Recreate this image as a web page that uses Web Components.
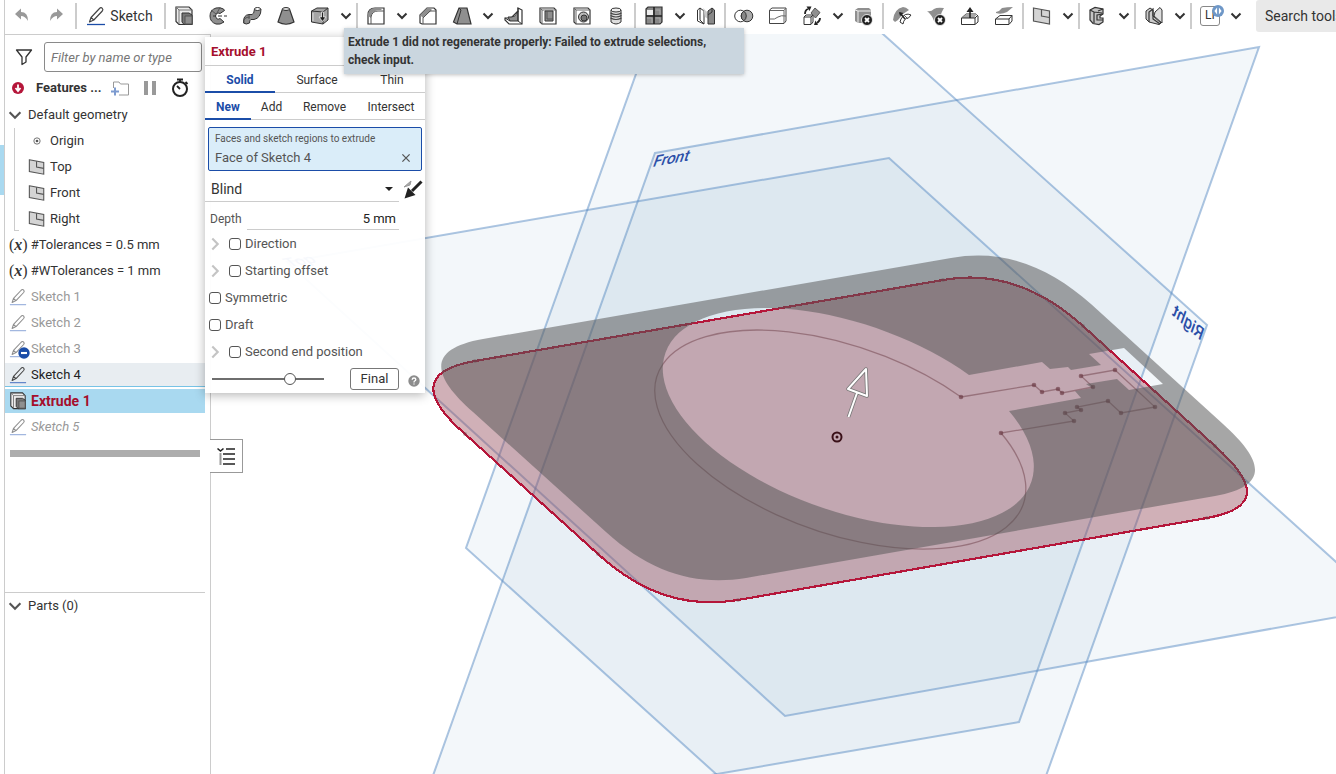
<!DOCTYPE html>
<html lang="en">
<head>
<meta charset="utf-8">
<title>Part Studio</title>
<style>
html,body{margin:0;height:100%;overflow:hidden}
body{font:14px/18px Roboto,"Liberation Sans",sans-serif;color:#333;background:#fff}
</style>
</head>
<body>
<part-studio></part-studio>
<script>
const define = (name, html, setup) => {
  const template = document.createElement('template');
  template.innerHTML = html;
  customElements.define(name, class extends HTMLElement {
    connectedCallback() {
      if (this.shadowRoot) return;
      this.attachShadow({mode: 'open'}).append(template.content.cloneNode(true));
      if (setup) setup(this, this.shadowRoot);
    }
  });
};

const G = '#8f8f8f', K = '#333';
const ICONS = {
  undo: `<path d="M3 8L9 2.500V6Q16 6 16 15Q13 10 9 10V13.500Z" fill="#999"/>`,
  redo: `<path d="M17 8L11 2.500V6Q4 6 4 15Q7 10 11 10V13.500Z" fill="#999"/>`,
  pencil: `<path d="M1 18.500H19" stroke="var(--ink-line,#1b4da8)" stroke-width="1.300"/><path d="M3.500 16L5 11.500L13.500 2.500Q15 1 16.300 2.300Q17.500 3.500 16.300 5L7.800 14ZM5 11.500L7.800 14" fill="none" stroke="#444" stroke-width="1.200" stroke-linejoin="round"/>`,
  extrude: `<path d="M2 1H15L18 4V18.500H5L2 15.500Z" fill="#ececec" stroke="${K}" stroke-width="1.200"/><path d="M2 1L5 4V18M5 4H18" fill="none" stroke="#777"/><path d="M8 7H15L18 9V18.500H10L8 16Z" fill="#777" stroke="${K}"/><path d="M11 10H18V18H11Z" fill="${G}" stroke="#555"/>`,
  revolve: `<path d="M15.500 3Q12 1 8 2Q2 4 2 10Q2 16 8 18Q12 19 16 16L12 12.500Q10 14 8.500 12.500Q6.500 10 8.500 7.500Q10 6.500 12 7.500L16.500 4.500Z" fill="${G}" stroke="${K}"/><path d="M12 1.500L9 7M3 4L8 8" stroke="#555"/><path d="M9 10H19" stroke="#fff" stroke-width="3"/><path d="M5 10H8M10 10H14M16 10H19" stroke="${K}"/>`,
  sweep: `<path d="M1.500 17Q1 9 7 8.500H10Q12 8.500 12.500 3L19 3Q19 12 12 13.500H9Q7.500 14 7.500 17Q4 19 1.500 17Z" fill="${G}" stroke="${K}"/><ellipse cx="15.500" cy="3" rx="3" ry="1.500" fill="#fff" stroke="${K}"/><path d="M2 17Q1 11 8 11M7 9V13" fill="none" stroke="#555"/>`,
  loft: `<path d="M6.500 3L2 16Q10 20.500 18 16L13.500 3Z" fill="${G}" stroke="${K}" stroke-width="1.200"/><ellipse cx="10" cy="3" rx="3.500" ry="1.500" fill="#ddd" stroke="${K}"/>`,
  thicken: `<path d="M1.500 5L7 2H18V14L13 18L1.500 16Z" fill="#a5a5a5" stroke="${K}"/><path d="M1.500 5L13 6V18M13 6L18 2" fill="none" stroke="${K}"/><path d="M3 7V15" stroke="#ddd"/><path d="M11.500 6V11H9L12.500 15.500L16 11H13.500V6Z" fill="#222" stroke="#eee" stroke-width=".8"/>`,
  fillet: `<path d="M2 18V9Q2 2 9 2H18V18Z" fill="#fff" stroke="${K}" stroke-width="1.200"/><path d="M2 10Q2 2 9 2H14L16 4H12Q5 5 5 12L2 10Z" fill="${G}"/><path d="M5 18V11Q6 5 12 5H18" fill="none" stroke="#555"/>`,
  chamfer: `<path d="M2 17V9L9 2H16L18 4V18H4Z" fill="#fff" stroke="${K}" stroke-width="1.200"/><path d="M2 9L9 2H12L14 4L5 12Z" fill="${G}"/><path d="M5 18V12L12 5H18" fill="none" stroke="#555"/>`,
  draft: `<path d="M7 2H15L19 18H5L1.500 16Z" fill="${G}" stroke="${K}" stroke-width="1.200"/><path d="M7 2L9 4L5 18" fill="none" stroke="${K}"/>`,
  rib: `<path d="M14 2L18 4V18L5 18L1 14V12L7 12L14 5Z" fill="#fff" stroke="${K}" stroke-width="1.200"/><path d="M14 5V15H6L4 11Q12 12 14 5Z" fill="${G}" stroke="${K}"/><path d="M14 2V15L18 18M1 12L6 15" fill="none" stroke="${K}"/>`,
  shell: `<path d="M2 2H16L18 4V18H4L2 16Z" fill="#fff" stroke="${K}" stroke-width="1.200"/><path d="M2 2L4 4V18M4 4H18" fill="none" stroke="#666"/><path d="M7 5H15V15H7Z" fill="${G}" stroke="${K}"/><path d="M9 5V13H15" fill="none" stroke="#555"/>`,
  hole: `<path d="M2 2H16L18 4V18H4L2 16Z" fill="#fff" stroke="${K}" stroke-width="1.200"/><path d="M2 2L4 4V18M4 4H18" fill="none" stroke="#666"/><circle cx="11.500" cy="11" r="5" fill="#bbb" stroke="${K}"/><circle cx="12" cy="12" r="3" fill="#777" stroke="${K}"/>`,
  thread: `<path d="M5 4V16Q10 20 15 16V4" fill="#ddd" stroke="${K}"/><ellipse cx="10" cy="4" rx="5" ry="2" fill="#eee" stroke="${K}"/><path d="M4.500 7Q10 10 15.500 7M4.500 9.500Q10 12.500 15.500 9.500M4.500 12Q10 15 15.500 12" fill="none" stroke="#444" stroke-width="1.100"/>`,
  pattern: `<path d="M2 3L4 1H18V16L16 18H2Z" fill="#888" stroke="${K}" stroke-width="1.200"/><path d="M3 4H9V9H3Z" fill="#eee"/><path d="M2 10H18M10 1V18" stroke="#222" stroke-width="1.600"/><path d="M11.500 4H16V8.500M3 12H8V17M11.500 12H16V17" fill="none" stroke="#aaa"/>`,
  mirror: `<path d="M1.500 4L4 2L8 5V18L1.500 15Z" fill="#fff" stroke="${K}"/><path d="M4 2V14L8 18" fill="none" stroke="${K}"/><path d="M7 2L14 9V14L9 11Z" fill="#c9c9c9"/><path d="M12 5L16 2L18.500 4V18H12Z" fill="#888" stroke="${K}"/><path d="M12 9L16 6V2" fill="none" stroke="#333"/>`,
  boolean: `<circle cx="6.500" cy="10" r="5.800" fill="#fff" stroke="${K}"/><circle cx="13" cy="10" r="5.800" fill="#aaa" stroke="${K}"/><path d="M9.750 5.200A5.800 5.800 0 0 1 9.750 14.800A5.800 5.800 0 0 1 9.750 5.200Z" fill="#888" stroke="${K}"/>`,
  split: `<path d="M1.500 4L4 2H18V15L16 17.500H1.500Z" fill="#fff" stroke="#444"/><path d="M1.500 4.500H16V17M16 4.500L18 2M1.500 13Q7 14 10 11Q13 9 18 10" fill="none" stroke="#666"/>`,
  transform: `<path d="M2 11L4 9H11V16L9 18.500H2Z" fill="#fff" stroke="${K}"/><path d="M2 11H9V18M9 11L11 9" fill="none" stroke="${K}"/><path d="M13 2L18 6.500L13.500 12L9 7Z" fill="${G}" stroke="#555"/><path d="M3 8Q3 4 6 3" fill="none" stroke="#222" stroke-width="1.800"/><path d="M4.500 .5H9.500L7.500 5Z" fill="#222"/><path d="M18 12Q18 15 15 17" fill="none" stroke="#222" stroke-width="1.800"/><path d="M16 19H12L13.500 14.500Z" fill="#222"/>`,
  delpart: `<path d="M1 4L4 2H15L17 4V17H4L1 15Z" fill="${G}"/><path d="M1 4L4 5V17M4 5H17" fill="none" stroke="#eee"/><circle cx="13" cy="14" r="5.500" fill="#222" stroke="#fff" stroke-width=".8"/><path d="M11 12L15 16M15 12L11 16" stroke="#fff" stroke-width="1.800"/>`,
  moveface: `<path d="M1 14Q2 3 11 1Q14 1 17 4L11 8L6 14L3 16Z" fill="${G}"/><path d="M9 13Q13 6 19 9L16.500 12Q12 12 11 18L8 16Z" fill="#fff" stroke="${K}"/><path d="M13 13L8 7" stroke="#222" stroke-width="1.500"/><path d="M7 6L11.500 7L8 10Z" fill="#222"/><path d="M12 9L16 13" stroke="#555"/>`,
  delface: `<path d="M1 5Q5 6 8 3Q11 1 18 2Q15 7 15 9L8 15Q6 9 1 5Z" fill="${G}"/><circle cx="14" cy="14" r="5.500" fill="#222" stroke="#fff" stroke-width=".8"/><path d="M12 12L16 16M16 12L12 16" stroke="#fff" stroke-width="1.800"/>`,
  moveup: `<path d="M1.500 12L6 8H16L18 10V16L15 18.500H1.500Z" fill="#fff" stroke="${K}"/><path d="M6 8H17L14 12H2Z" fill="#aaa"/><path d="M1.500 12H15V18M15 12L18 9" fill="none" stroke="${K}"/><path d="M10 12V5" stroke="#222" stroke-width="1.600"/><path d="M10 1L13.500 6H6.500Z" fill="#222"/>`,
  replace: `<path d="M2 6Q6 5 8 2Q13 1 19 1L13 6Q7 9 2 7Z" fill="${G}"/><path d="M1.500 13L6 9.500H18V15L15 18.500H1.500Z" fill="#fff" stroke="${K}"/><path d="M1.500 13H15V18M15 13L18 9.500" fill="none" stroke="${K}"/>`,
  plane: `<path d="M1.500 2L17.500 5V18L1.500 15Z" fill="#d4d4d4" stroke="#555" stroke-width="1.200"/><path d="M9.500 3.500V10L17.500 11.500" fill="none" stroke="#555" stroke-width="1.200"/>`,
  frame: `<path d="M2 4L7 1.500L15 3V8L12 10V12H15V16L11 18.500L5 17.500L2 14Z" fill="#c5c5c5" stroke="${K}" stroke-width="1.200"/><path d="M2 4L6 6V17M6 6L14 7M15 3L10 5M15 8L9 9V14H15" fill="none" stroke="${K}" stroke-width="1.200"/>`,
  sheet: `<path d="M2 5L6 2L9 4V10L17 17L15 18.500L5 16L2 13Z" fill="#ccc" stroke="${K}"/><path d="M11 6L16 1.500L18 4V17L10 10Z" fill="#ddd" stroke="${K}"/><path d="M5 16V6L9 3V13L16 18" fill="none" stroke="${K}" stroke-width="1.200"/>`,
  funnel: `<path d="M2.500 3H17.500L12 10V15L8 17.500V10Z" fill="none" stroke="${K}" stroke-width="1.300" stroke-linejoin="round"/>`,
  errdown: `<circle cx="10" cy="10" r="6" fill="#b5163a"/><path d="M10 6.500V12M7.500 10L10 13L12.500 10" fill="none" stroke="#fff" stroke-width="1.800"/>`,
  addfolder: `<path d="M3.500 10V4H9L10.500 6H18.500V17H9" fill="none" stroke="#999"/><path d="M5 9.500V17.500M1 13.500H9" stroke="#7d9bd0" stroke-width="2"/>`,
  pause: `<path d="M6 3V17M14 3V17" stroke="#999" stroke-width="4"/>`,
  timer: `<circle cx="10" cy="11" r="7" fill="#fff" stroke="#222" stroke-width="2"/><path d="M7 1.500H13M10 1.500V4M10 11L7 8M15.500 4L17.500 6" stroke="#222" stroke-width="1.800"/>`,
  down: `<path d="M4 7L10 13L16 7" fill="none" stroke="#555" stroke-width="2.400"/>`,
  right: `<path d="M7 4L13 10L7 16" fill="none" stroke="#c4c4c4" stroke-width="2.400"/>`,
  origin: `<circle cx="10" cy="10" r="3.500" fill="none" stroke="#666"/><circle cx="10" cy="10" r="1.500" fill="#555"/>`,
  badge: `<circle cx="10" cy="10" r="9.500" fill="#1b4da8"/><path d="M5 10H15" stroke="#fff" stroke-width="3.500"/>`,
  flip: `<path d="M9 11L18.500 1.500" stroke="#222" stroke-width="3"/><path d="M1.500 18.500L5 7.500L12.500 15Z" fill="#222"/><path d="M1 7L8 1L7 5Z" fill="#aaa" stroke="#999"/>`,
  help: `<circle cx="10" cy="10" r="9.500" fill="#8c8c8c"/><path d="M7 8Q7 5 10 5Q13 5 13 7.500Q13 9 11 10Q10 10.500 10 12.500M10 14V16" fill="none" stroke="#fff" stroke-width="2.200"/>`,
  close: `<path d="M5.500 5.500L14.500 14.500M14.500 5.500L5.500 14.500" stroke="#555" stroke-width="1.600"/>`,
  list: `<path d="M10 3H19M7 8H19M7 13H19M7 18H19" stroke="#222" stroke-width="1.300"/><path d="M4.500 7V19" stroke="#999" stroke-width="2"/><path d="M1.500 2.500L4.500 5L7.500 2.500" fill="none" stroke="#222" stroke-width="1.600"/>`,
  custom: `<circle cx="10" cy="10" r="10" fill="#6e97c7"/><path d="M8.500 8V4L4 10L8.500 16V12M11.500 8V4L16 10L11.500 16V12" fill="#fff"/>`
};

define('cad-icon', `<style>:host{display:block;flex:none;width:20px;height:20px}svg{display:block;width:100%;height:100%}</style><svg viewBox="0 0 20 20" aria-hidden="true"></svg>`,
  (el, root) => { root.querySelector('svg').innerHTML = ICONS[el.getAttribute('name')] || ''; });

define('tool-button', `<style>
  :host{display:block;flex:none}
  button{display:flex;align-items:center;justify-content:center;gap:4px;width:var(--tool-width,34px);height:32px;border:0;padding:0;background:none;font:inherit;color:inherit}
</style><button><slot></slot></button>`, (el, root) => {
  root.querySelector('button').setAttribute('aria-label', el.getAttribute('label'));
});

define('tool-more', `<style>
  :host{display:block;flex:none}
  button{display:flex;align-items:center;justify-content:center;width:18px;height:32px;border:0;padding:0;background:none}
  svg{width:12px;height:8px}
</style><button aria-label="More tools"><svg viewBox="0 0 12 8"><path d="M1.500 1.500L6 6L10.500 1.500" fill="none" stroke="#333" stroke-width="2"/></svg></button>`);

define('tool-divider', `<style>:host{display:block;flex:none;width:2px;height:26px;margin:0 1px;background:#ccc}</style>`);

const tool = n => `<tool-button label="${n}"><cad-icon name="${n}"></cad-icon></tool-button>`;
const more = '<tool-more></tool-more>', divider = '<tool-divider></tool-divider>';
define('tool-bar', `<style>
  :host{display:flex;align-items:center;height:32px;padding-bottom:2px;overflow:hidden;white-space:nowrap}
  .wide{--tool-width:83px;padding-right:2px}
  .history{display:flex;padding-right:1px}
  .custom{position:relative;box-sizing:border-box;width:20px;height:20px;border:1px solid #888;border-radius:3px;font-size:12px;line-height:16px;text-align:left;padding-left:4px}
  .custom cad-icon{position:absolute;right:-5px;top:-2px;width:12px;height:12px}
  input{box-sizing:border-box;flex:1 0 80px;min-width:0;height:32px;margin-left:11px;border:0;border-radius:3px 0 0 3px;background:#e9e9e9;padding:0 0 0 9px;font:inherit;color:#333}
  input::placeholder{color:#333;opacity:1}
</style>
<div class="history">${tool('undo')}${tool('redo')}</div>${divider}
<tool-button class="wide" label="Sketch"><cad-icon name="pencil"></cad-icon>Sketch</tool-button>${divider}
${['extrude','revolve','sweep','loft','thicken'].map(tool).join('')}${more}${divider}
${tool('fillet')}${more}${tool('chamfer')}${tool('draft')}${more}${['rib','shell','hole','thread'].map(tool).join('')}${divider}
${tool('pattern')}${more}${tool('mirror')}${divider}
${['boolean','split','transform'].map(tool).join('')}${more}${tool('delpart')}${divider}
${['moveface','delface','moveup','replace'].map(tool).join('')}${divider}
${tool('plane')}${more}${divider}${tool('frame')}${more}${divider}${tool('sheet')}${more}${divider}
<tool-button label="Custom features"><span class="custom">LI<cad-icon name="custom"></cad-icon></span></tool-button>${more}
<input aria-label="Search tools" placeholder="Search tools…">`);

define('tree-row', `<style>
  :host{display:flow-root;height:26px}
  div{position:relative;display:flex;align-items:center;height:24px;margin:1px 0;padding-left:4px;gap:4px;white-space:nowrap}
  cad-icon{width:18px;height:18px}
  cad-icon[name=down]{margin-left:-3px}
  .badge{position:absolute;left:13px;top:10px;width:12px;height:12px}
  :host([nested]) div{padding-left:23px}
  :host([variable]) div{gap:3px}
  .var{display:none;font:italic bold 16px/18px "Liberation Serif",serif}
  .var i{font-style:normal;font-weight:normal}
  :host([variable]) .var{display:block}
  :host([variable]) cad-icon{display:none}
  :host([dim]){color:#999}
  :host([dim]) cad-icon.main{opacity:.6}
  :host([pending]){font-style:italic}
  :host([hover]) div{height:23px;background:#e8edf1;border-bottom:1px solid #76c3e6}
  :host([hover]){color:#222}
  :host([active]) div{background:#a9d9f0}
  :host([active]){color:#a50f2d;font-weight:bold;font-size:14px}
  .main{--ink-line:#5b80c8}
</style><div><span class="var"><i>(</i>x<i>)</i></span><slot></slot></div>`, (el, root) => {
  const name = el.getAttribute('icon'), box = root.querySelector('div');
  if (name) box.insertAdjacentHTML('afterbegin', `<cad-icon class="main" name="${name}"></cad-icon>`);
  else if (!el.hasAttribute('variable')) box.querySelector('.var').remove();
  if (el.hasAttribute('excluded')) box.insertAdjacentHTML('beforeend', '<cad-icon class="badge" name="badge"></cad-icon>');
});

define('feature-tree', `<style>
  :host{display:flex;flex-direction:column;box-sizing:border-box;border-top:1px solid #ccc;border-right:1px solid #ccc;padding-right:5px;font-size:13px}
  .filter{display:flex;align-items:center;gap:10px;padding:7px 3px 0 9px}
  .filter input{box-sizing:border-box;flex:1;min-width:0;height:30px;border:1px solid #8a8a8a;border-radius:3px;padding:0 6px;font:inherit;font-style:italic;color:#333}
  input::placeholder{color:#777;opacity:1}
  .head{display:flex;align-items:center;height:30px;padding:1px 0 0 3px;box-sizing:border-box}
  .head b{width:67px;margin:0 7px 0 8px;white-space:nowrap}
  .head button{border:0;padding:0;background:none;margin-right:10px}
  .nest{position:relative}
  .nest::before{content:"";position:absolute;left:9px;top:0;bottom:1px;width:5px;border-bottom:1px solid #ccc;background:linear-gradient(#ccc,#ccc) 0 0/1px 100% no-repeat}
  .rollback{height:7px;margin:10px 5px 0;background:#adadad}
  .parts{margin-top:135px;border-top:1px solid #ccc}
</style>
<div class="filter"><cad-icon name="funnel"></cad-icon><input aria-label="Filter" placeholder="Filter by name or type"></div>
<div class="head"><cad-icon name="errdown"></cad-icon><b>Features ...</b><button aria-label="Add folder"><cad-icon name="addfolder"></cad-icon></button><button aria-label="Pause"><cad-icon name="pause"></cad-icon></button><button aria-label="Timer"><cad-icon name="timer"></cad-icon></button></div>
<tree-row icon="down">Default geometry</tree-row>
<div class="nest">
<tree-row nested icon="origin">Origin</tree-row><tree-row nested icon="plane">Top</tree-row><tree-row nested icon="plane">Front</tree-row><tree-row nested icon="plane">Right</tree-row>
</div>
<tree-row variable>#Tolerances = 0.5 mm</tree-row><tree-row variable>#WTolerances = 1 mm</tree-row>
<tree-row dim icon="pencil">Sketch 1</tree-row><tree-row dim icon="pencil">Sketch 2</tree-row><tree-row dim excluded icon="pencil">Sketch 3</tree-row>
<tree-row hover icon="pencil">Sketch 4</tree-row><tree-row active icon="extrude">Extrude 1</tree-row><tree-row dim pending icon="pencil">Sketch 5</tree-row>
<div class="rollback"></div>
<div class="parts"><tree-row icon="down">Parts (0)</tree-row></div>`);

define('tab-strip', `<style>
  :host{display:grid;height:26px;border-bottom:1px solid #ccc;font-size:12px}
  ::slotted(button){border:0;border-bottom:2px solid transparent;margin-bottom:-1px;background:none;padding:2px 0 0;font:inherit;color:#333}
  ::slotted(button[aria-selected=true]){color:#1b4da8;border-color:#1b4da8;font-weight:bold}
</style><slot></slot>`);

define('check-row', `<style>
  :host{display:flex;align-items:center;height:27px;color:#555;padding-left:4px}
  label{display:flex;align-items:center;gap:4px}
  input{appearance:none;box-sizing:border-box;width:12px;height:12px;margin:0;border:1px solid #555;border-radius:3px;background:#fff}
  cad-icon{display:none;width:18px;height:18px;margin:0 5px 0 -3px}
  :host([expandable]) cad-icon{display:block}
</style><cad-icon name="right"></cad-icon><label><input type="checkbox"><slot></slot></label>`);

define('extrude-dialog', `<style>
  :host{display:block;box-sizing:border-box;width:220px;background:rgba(255,255,255,.96);box-shadow:0 2px 10px rgba(0,0,0,.3);font-size:13px}
  h2{margin:0;height:28px;padding-left:6px;font:bold 13px/29px Roboto,sans-serif;color:#a50f2d;border-bottom:1px solid #ccc}
  .kind{grid-template-columns:70px 84px 1fr}
  .op{grid-template-columns:46px 41px 65px 1fr}
  .pick{box-sizing:border-box;height:44px;margin:7px 3px 6px;border:1px solid #1b4da8;border-radius:2px;background:#daedf9;padding:3px 6px;color:#555}
  .pick small{display:block;font-size:10px;line-height:16px}
  .pick p{display:flex;justify-content:space-between;align-items:center;margin:0;line-height:22px}
  .pick button,.flip{border:0;background:none;padding:0}
  .pick cad-icon{width:16px;height:16px;margin-right:1px}
  .end{display:flex;align-items:center;height:25px}
  .choice{position:relative;width:194px;border-bottom:1px solid #ccc}
  select{appearance:none;display:block;width:100%;height:24px;border:0;background:none;padding:0 6px;font:inherit;font-size:14px;color:#333}
  .choice::after{content:"";position:absolute;right:6px;top:10px;border:4px solid transparent;border-top-color:#222;border-bottom:0}
  .flip{margin-left:4px}
  .depth{display:flex;align-items:center;height:28px;padding:0 26px 0 5px}
  .depth label{width:37px;padding-top:6px;font-size:12px;color:#555}
  .depth input{box-sizing:border-box;flex:1;min-width:0;height:22px;margin-top:6px;border:0;border-bottom:1px solid #ccc;background:none;text-align:right;font:inherit;color:#222;padding:0 3px 0}
  footer{display:flex;align-items:center;height:28px}
  input[type=range]{appearance:none;width:112px;height:12px;margin:0 26px 0 7px;background:linear-gradient(#6e6e6e,#6e6e6e) center/100% 2px no-repeat}
  input[type=range]::-webkit-slider-thumb{appearance:none;width:12px;height:12px;box-sizing:border-box;border:1px solid #555;border-radius:50%;background:#fff}
  .final{box-sizing:border-box;width:49px;height:22px;border:1px solid #777;border-radius:3px;background:#fff;padding:0;font:inherit;line-height:18px;color:#333}
  .help{width:12px;height:12px;margin:4px 0 0 9px}
</style>
<h2>Extrude 1</h2>
<tab-strip class="kind"><button aria-selected="true">Solid</button><button>Surface</button><button>Thin</button></tab-strip>
<tab-strip class="op"><button aria-selected="true">New</button><button>Add</button><button>Remove</button><button>Intersect</button></tab-strip>
<div class="pick"><small>Faces and sketch regions to extrude</small><p>Face of Sketch 4<button aria-label="Clear"><cad-icon name="close"></cad-icon></button></p></div>
<div class="end"><div class="choice"><select aria-label="End type"><option>Blind</option></select></div><button class="flip" aria-label="Flip direction"><cad-icon name="flip"></cad-icon></button></div>
<div class="depth"><label for="depth">Depth</label><input id="depth" value="5 mm"></div>
<check-row expandable>Direction</check-row><check-row expandable>Starting offset</check-row><check-row>Symmetric</check-row><check-row>Draft</check-row><check-row expandable>Second end position</check-row>
<footer><input type="range" aria-label="Preview opacity" min="0" max="100" value="72"><button class="final">Final</button><cad-icon class="help" name="help"></cad-icon></footer>`);

define('error-tip', `<style>
  :host{display:block;box-sizing:border-box;width:400px;padding:5px 4px;background:#cad6df;box-shadow:0 1px 4px rgba(0,0,0,.25);font:bold 12px/18px Roboto,sans-serif;color:#333}
</style><slot></slot>`);

const POINTS = [[961,397],[1034,385],[1042,392],[1058,389],[1062,393],[1093,387],[1081,376],[1115,370],[1155,407],[1121,413],[1108,401],[1077,407],[1081,410],[1065,413],[1074,421],[1001,433]];
const JOINTS = [[475,361],[465,434],[598,554],[738,600],[1207,518],[1215,446],[1083,326],[943,280]];
const dots = (list, r) => list.map(p => `<circle cx="${p[0]}" cy="${p[1]}" r="${r}"/>`).join('');
const OUTLINE = 'M475 361C418 371 424 398 465 434L598 554C643 595 688 608 738 600L1207 518C1262 508 1256 483 1215 446L1083 326C1044 291 998 270 943 280Z';
define('model-view', `<style>
  :host{display:block;overflow:hidden}
  svg{display:block;width:100%;height:100%}
  .plane{fill:rgba(100,150,190,.08);stroke:rgba(90,140,195,.5);stroke-width:2}
  text{font:500 17px Roboto,sans-serif;fill:#2c50a8}
</style>
<svg role="img" aria-label="Model"><g transform="translate(-205 -34)">
  <path class="plane" d="M655 153L1259 47L1019 722L415 826Z"/>
  <path class="plane" d="M707 -124L1207 325L966 1000L466 548Z"/>
  <path class="plane" d="M287 262L889 158L1387 608L785 716Z"/>
  <text transform="matrix(.9 -.16 -.34 .95 652 167)">Front</text>
  <text transform="matrix(-.74 -.67 -.34 .94 1201 341)">Right</text>
  <text transform="matrix(.98 -.17 .74 .67 290 267)">Top</text>
  <path d="${OUTLINE}" fill="rgba(156,70,82,.4)" stroke="#b5163a" stroke-width="2.200" shape-rendering="crispEdges"/>
  <path d="M${POINTS.map(p => p.join(' ')).join('L')}A194 93.700 19.500 1 1 961 397" fill="none" stroke="rgba(100,50,60,.45)" stroke-width="1.300"/>
  <g fill="rgba(100,50,60,.6)">${dots(POINTS, 2.3)}</g><g fill="rgba(100,50,60,.35)">${dots(JOINTS, 2)}</g>
  <path fill="rgba(86,86,86,.53)" fill-rule="evenodd" d="M483 339C426 349 432 376 473 412L606 532C651 573 696 586 746 578L1215 496C1270 486 1264 461 1223 424L1091 304C1052 269 1006 248 951 258ZM969 375L1042 362L1050 369L1068 367L1071 370L1101 365L1089 354L1124 348L1163 384L1129 390L1117 379L1086 384L1092 388L1075 391L1081 398L1009 411A194 93.700 19.500 1 1 969 375Z"/>
  <g fill="none" stroke-linejoin="round"><path d="M866 369L848 389L867 396ZM857 393L848.500 417" stroke="#777" stroke-width="3.600"/><path d="M866 369L848 389L867 396ZM857 393L848.500 417" stroke="#fff" stroke-width="2"/></g>
  <circle cx="837" cy="437" r="4.500" fill="none" stroke="#3a1018" stroke-width="2"/><circle cx="837" cy="437" r="1.500" fill="#3a1018"/>
</g></svg>`);

define('part-studio', `<style>
  :host{display:grid;grid-template-columns:5px minmax(0,1fr);height:100vh;overflow:hidden}
  .rail{border-right:1px solid #ccc;padding-top:145px}
  .rail i{display:block;height:50px;background:#a9d9f0}
  main{display:grid;grid-template-rows:34px minmax(0,1fr)}
  .work{position:relative;display:grid;grid-template-columns:206px minmax(0,1fr)}
  model-view{margin-left:-6px}
  feature-tree{position:relative;z-index:1}
  extrude-dialog{position:absolute;z-index:2;left:200px;top:3px}
  error-tip{position:absolute;z-index:3;left:339px;top:-6px}
  .toggle{position:absolute;z-index:1;left:205px;top:405px;width:33px;height:34px;display:flex;align-items:center;justify-content:center;border:1px solid #999;border-left:0;background:#fff;padding:0}
</style>
<div class="rail"><i></i></div>
<main>
  <tool-bar></tool-bar>
  <div class="work">
    <feature-tree></feature-tree>
    <model-view></model-view>
    <button class="toggle" aria-label="Show list"><cad-icon name="list"></cad-icon></button>
    <extrude-dialog></extrude-dialog>
    <error-tip role="alert">Extrude 1 did not regenerate properly: Failed to extrude selections, check input.</error-tip>
  </div>
</main>`);
</script>
</body>
</html>
